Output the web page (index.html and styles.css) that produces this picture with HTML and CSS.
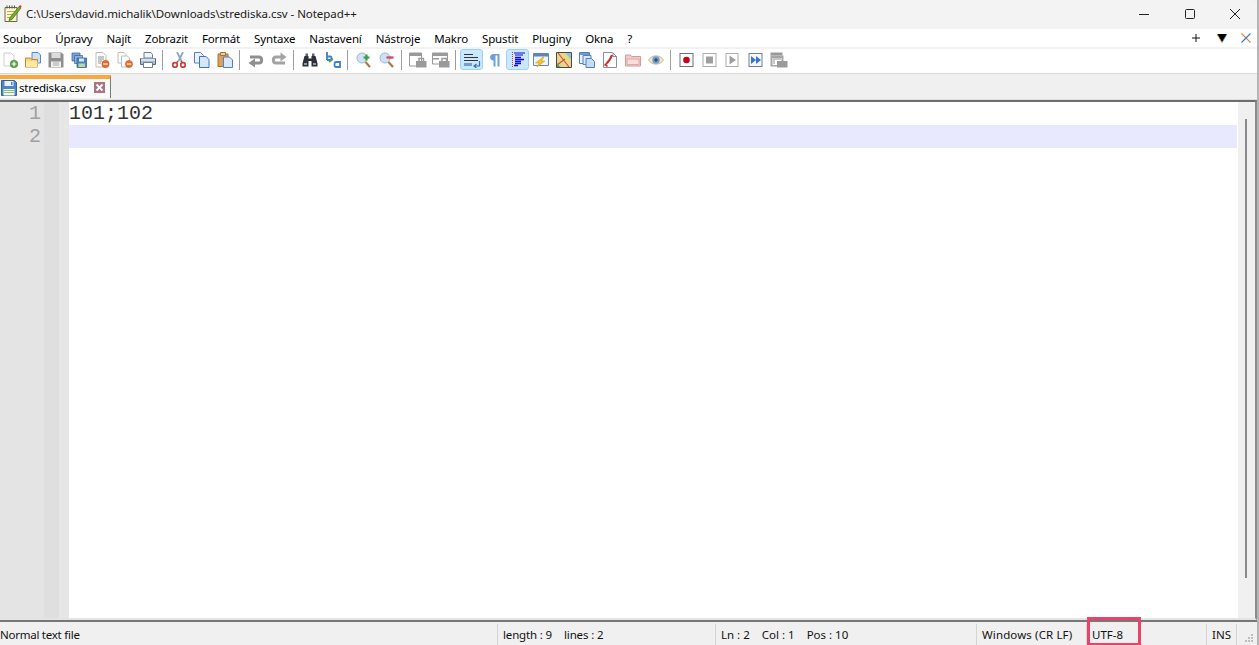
FILE: index.html
```html
<!DOCTYPE html>
<html lang="cs">
<head>
<meta charset="utf-8">
<title>strediska.csv - Notepad++</title>
<link rel="stylesheet" href="styles.css">
</head>
<body>
<div class="win">
  <header class="titlebar">
    <svg class="appicon" viewBox="0 0 18 18"><path d="M1 3h12v14H1z" fill="#fdf6c8" stroke="#6b6b5a"/><path d="M3 1v3M5.500 1v3M8 1v3M10.500 1v3" stroke="#555"/><path d="M3 7h8M3 10h6M3 13h5" stroke="#a9b06a"/><path d="M6 13L15 2l2 1.500L8 15l-3 1z" fill="#7bb026" stroke="#3f6a10" stroke-width=".7"/><path d="M15 2l1-1.500 1.500 1L17 3.500z" fill="#d33"/></svg>
    <span class="title">C:\Users\david.michalik\Downloads\strediska.csv - Notepad++</span>
    <div class="wincontrols">
      <svg class="wc" viewBox="0 0 10 10"><path d="M0 5.500h10" stroke="#222" stroke-width="1"/></svg>
      <svg class="wc" viewBox="0 0 10 10"><rect x=".5" y=".5" width="9" height="9" rx="1" fill="none" stroke="#222"/></svg>
      <svg class="wc" viewBox="0 0 10 10"><path d="M0 0l10 10M10 0L0 10" stroke="#222" stroke-width="1"/></svg>
    </div>
  </header>

  <nav class="menubar">
    <span>Soubor</span><span>Úpravy</span><span>Najít</span><span>Zobrazit</span><span>Formát</span><span>Syntaxe</span><span>Nastavení</span><span>Nástroje</span><span>Makro</span><span>Spustit</span><span>Pluginy</span><span>Okna</span><span>?</span>
    <div class="menuright">
      <svg class="mr plus" viewBox="0 0 8 8"><path d="M4 0v8M0 4h8" stroke="#111" stroke-width="1"/></svg>
      <svg class="mr" viewBox="0 0 10 10"><path d="M0 1h10L5 9.500z" fill="#000"/><path d="M0 1l5 8.500" stroke="#e98a1c" stroke-width=".8"/><path d="M10 1L5 9.500" stroke="#3a8fdc" stroke-width=".8"/></svg>
      <svg class="mr" viewBox="0 0 10 10"><path d="M.5.500l9 9" stroke="#e0853a" stroke-width="1.100"/><path d="M9.500.500l-9 9" stroke="#2f78c8" stroke-width="1.100"/></svg>
    </div>
  </nav>

  <div class="toolbar">
    <div class="btn"><svg viewBox="0 0 16 16"><path d="M2 1h7l3 3v10H2z" fill="#fff" stroke="#cfcfcf"/><circle cx="12" cy="12" r="3.800" fill="#5da84a" stroke="#3d7f30" stroke-width=".6"/><path d="M12 9.800v4.400M9.800 12h4.400" stroke="#fff" stroke-width="1.200"/></svg></div>
    <div class="btn"><svg viewBox="0 0 16 16"><path d="M7 .5h6l2.500 2.500v8H7z" fill="#cfe0f5" stroke="#5a86c0"/><path d="M.5 6h5l1 1.500h6V15H.5z" fill="#fbd77c" stroke="#c8862a"/><path d="M1 9.500h11.500V15H1z" fill="#fdeaa5"/></svg></div>
    <div class="btn"><svg viewBox="0 0 16 16"><path d="M.5.500h13l2 2v13H.5z" fill="#8f8f8f"/><path d="M3.500 1h9v5h-9z" fill="#dcdcdc"/><path d="M3 9.500h10V15H3z" fill="#efefef"/><path d="M5 11h6M5 13h6" stroke="#aaa"/></svg></div>
    <div class="btn"><svg viewBox="0 0 16 16"><path d="M1 1h8v8H1z" fill="#7ea6d8" stroke="#2f5f9e" stroke-width=".7"/><path d="M3.500 3.500h8v8h-8z" fill="#8db3e0" stroke="#2f5f9e" stroke-width=".7"/><path d="M6 6h9.500v9.500H6z" fill="#4f82c2" stroke="#2a5a98" stroke-width=".7"/><path d="M8 6.500h5v3H8z" fill="#dbe8f7"/><path d="M7.500 11.500h6.500V15H7.500z" fill="#b5dc98"/></svg></div>
    <div class="btn"><svg viewBox="0 0 16 16"><path d="M2 .5h7l3 3V15H2z" fill="#fff" stroke="#bdbdbd"/><path d="M4 5h6M4 7h6M4 9h4M4 11h3" stroke="#8d8d8d"/><circle cx="11.500" cy="12" r="3.700" fill="#ec6a2b" stroke="#c94f18" stroke-width=".5"/><path d="M9.300 12h4.400" stroke="#fff" stroke-width="1.300"/></svg></div>
    <div class="btn"><svg viewBox="0 0 16 16"><path d="M1 .5h6l2 2V11H1z" fill="#fff" stroke="#bdbdbd"/><path d="M4.500 4h6l2 2v9h-8z" fill="#fff" stroke="#bdbdbd"/><circle cx="12" cy="12" r="3.600" fill="#ec6a2b" stroke="#c94f18" stroke-width=".5"/><path d="M9.800 12h4.400" stroke="#fff" stroke-width="1.300"/></svg></div>
    <div class="btn"><svg viewBox="0 0 16 16"><path d="M4 .5h7l1.500 2V6h-8.500z" fill="#eef3f8" stroke="#6c7d90"/><path d="M.5 6.500h15v6h-15z" fill="#a9bdd2" stroke="#53667c"/><path d="M1 6.500h14v2.500H1z" fill="#d5e0ec"/><path d="M3.500 10.500h9v5h-9z" fill="#fff" stroke="#6c7d90"/></svg></div>
    <div class="sep"></div>
    <div class="btn"><svg viewBox="0 0 16 16"><path d="M12 0L7.500 9M6 0l4.500 9" stroke="#8fa4c0" stroke-width="1.800" fill="none"/><path d="M7 9L5.500 11M10 9l1.500 2" stroke="#c33" stroke-width="1.500"/><circle cx="4" cy="13" r="2.300" fill="none" stroke="#c73a3a" stroke-width="1.700"/><circle cx="12" cy="13" r="2.300" fill="none" stroke="#c73a3a" stroke-width="1.700"/></svg></div>
    <div class="btn"><svg viewBox="0 0 16 16"><path d="M.5.500h6l3 3v7.500h-9z" fill="#eaf2fb" stroke="#4f80c4"/><path d="M5.500 4.500h6.500l3 3v8h-9.500z" fill="#d6e5f7" stroke="#3f72bc"/></svg></div>
    <div class="btn"><svg viewBox="0 0 16 16"><path d="M1 2h10v12.500H1z" fill="#d9a35f" stroke="#a8702f"/><path d="M3.500 .5h5v3h-5z" fill="#e8d1ac" stroke="#a8702f"/><path d="M6.500 5h6l3 3v7.500h-9z" fill="#dbe8f8" stroke="#4f80c4"/></svg></div>
    <div class="sep"></div>
    <div class="btn"><svg viewBox="0 0 16 16"><path d="M2 5h9c3.500 0 3.500 6 0 6H6" fill="none" stroke="#8f8f8f" stroke-width="3"/><path d="M7 6.500v9L.5 11z" fill="#8f8f8f"/></svg></div>
    <div class="btn"><svg viewBox="0 0 16 16"><path d="M10 5H5c-3.500 0-3.500 6 0 6h9" fill="none" stroke="#a3a3a3" stroke-width="3"/><path d="M9.500.5v9L15.500 5z" fill="#a3a3a3"/></svg></div>
    <div class="sep"></div>
    <div class="btn"><svg viewBox="0 0 16 16"><path d="M2.500 4h4v2.500h3V4h4l2 7.500v3H9.500V9h-3v5.500H.5v-3z" fill="#2c3138"/><path d="M3.500 1.500h2.500v2.500H3.500zM10 1.500h2.500v2.500H10z" fill="#5a6472"/><path d="M2 11h3v2H2zM11 11h3v2h-3z" fill="#8b9ab0"/></svg></div>
    <div class="btn"><svg viewBox="0 0 16 16"><path d="M2 0v8M2 4.500h3.500c1.500 0 1.500 3.500 0 3.500H2" fill="none" stroke="#3d7fd0" stroke-width="1.800"/><path d="M4 10l4-3" stroke="#4fa34a" stroke-width="1.600"/><path d="M15 10h-4c-2 0-2 5 0 5h4M15 9v7" fill="none" stroke="#3d7fd0" stroke-width="1.800"/></svg></div>
    <div class="sep"></div>
    <div class="btn"><svg viewBox="0 0 16 16"><circle cx="6" cy="6" r="5" fill="#cfe2f5" stroke="#9ab8d8"/><path d="M9.500 10l4.500 5" stroke="#a87a4a" stroke-width="2.200"/><path d="M10.500 2.500v6M7.500 5.500h6" stroke="#3f9a3f" stroke-width="2.200"/></svg></div>
    <div class="btn"><svg viewBox="0 0 16 16"><circle cx="6" cy="6" r="5" fill="#cfe2f5" stroke="#9ab8d8"/><path d="M9.500 10l4.500 5" stroke="#a87a4a" stroke-width="2.200"/><path d="M7.500 5.500h7" stroke="#dc4a56" stroke-width="2.400"/></svg></div>
    <div class="sep"></div>
    <div class="btn"><svg class="wide" viewBox="0 0 18 16"><path d="M.5 1h12v13H.5z" fill="#fff" stroke="#9a9a9a"/><path d="M1 1h11v3H1z" fill="#9a9a9a"/><path d="M7 9h10.500v6.500H7z" fill="#9a9a9a"/><path d="M10 9V6.500h4.500V9" fill="none" stroke="#9a9a9a" stroke-width="1.500"/></svg></div>
    <div class="btn"><svg class="wide" viewBox="0 0 18 16"><path d="M.5 1h15v11H.5z" fill="#fff" stroke="#9a9a9a"/><path d="M1 1h14v3H1zM1 6h6v1.500H1z" fill="#9a9a9a"/><path d="M7 9h10.500v6.500H7z" fill="#9a9a9a"/><path d="M10 9V6.500h4.500V9" fill="none" stroke="#9a9a9a" stroke-width="1.500"/></svg></div>
    <div class="sep"></div>
    <div class="btn on"><svg class="wide" viewBox="0 0 18 16"><path d="M1 2.500h9M1 5.500h14M1 8.500h14" stroke="#333" stroke-width="1.200"/><path d="M1 12.500h8" stroke="#6f9fd8" stroke-width="3"/><path d="M16.500 9v5h-5M13.500 12l-2.500 2 2.500 2" fill="none" stroke="#3f6fb0" stroke-width="1.200"/></svg></div>
    <div class="btn"><svg viewBox="0 0 16 16"><path d="M6.500 14.500V8.500C2 8.500 2 2 6.500 2h6v12.500h-2V3.500h-2v11z" fill="#6f9fd8"/></svg></div>
    <div class="btn on"><svg viewBox="0 0 16 16"><path d="M2.500 0v16" stroke="#e03030" stroke-dasharray="1 1" stroke-width="1"/><path d="M4 1h11M5 3h8" stroke="#0a0ad8" stroke-width="1"/><path d="M5 5.500h6M5 7.500h9M5 9.500h6M5 11.500h6M4 13.500h4" stroke="#0a0ad8" stroke-width="1.300"/></svg></div>
    <div class="btn"><svg viewBox="0 0 16 16"><path d="M.5 1.500h15v12H.5z" fill="#f1f6fc" stroke="#5e86bd"/><path d="M1 2h14v2.500H1z" fill="#5e86bd"/><path d="M10 5L2.500 11H6l-2 4 8-6H8.500L11 5z" fill="#f2c230" stroke="#cf9a18" stroke-width=".5"/></svg></div>
    <div class="btn"><svg viewBox="0 0 16 16"><path d="M.5.500h15v15H.5z" fill="#c9d98a" stroke="#4a4a4a"/><path d="M1 9l6 6h8V9L9 1H1z" fill="#e9d78a"/><path d="M2 1l11 14M1 13l8-6" stroke="#cf4a3a" stroke-width="1.100"/><path d="M10 1h5v6z" fill="#8fc0df"/><path d="M1 11l3 4H1z" fill="#5fa04a"/></svg></div>
    <div class="btn"><svg viewBox="0 0 16 16"><path d="M.5.500h10v11H.5z" fill="#eef4fb" stroke="#4f80c4"/><path d="M1 1h9v2H1z" fill="#6f9ad0"/><path d="M4 3.500h8v9H4z" fill="#dce8f7" stroke="#4f80c4"/><path d="M7 6.500h5.500l3 3v6H7z" fill="#c8daf2" stroke="#4f80c4"/></svg></div>
    <div class="btn"><svg viewBox="0 0 16 16"><path d="M1.500.500h9l4 4v11h-13z" fill="#fff" stroke="#8f8f8f"/><path d="M11 .5v4h4" fill="none" stroke="#8f8f8f"/><path d="M10 3c-1 3-3 6-5 8" stroke="#cf2a2a" stroke-width="2.200" fill="none"/><path d="M2.500 13.500l3.500-3.500M4 13l1.500 1.500" stroke="#cf2a2a" stroke-width="1.600"/></svg></div>
    <div class="btn"><svg viewBox="0 0 16 16"><path d="M.5 3h5l1 1.500h9V14H.5z" fill="#f3c9c9" stroke="#d49a9a"/><path d="M2 7h12v5.500H2z" fill="#f8dddd" stroke="#dcaaaa"/></svg></div>
    <div class="btn"><svg viewBox="0 0 16 16"><path d="M.5 8C4 2.500 12 2.500 15.500 8 12 13.500 4 13.500.5 8z" fill="#f3ead8" stroke="#cfae82"/><circle cx="8" cy="8" r="3.800" fill="#6f9fd0"/><circle cx="8" cy="8" r="1.700" fill="#2f4c74"/></svg></div>
    <div class="sep"></div>
    <div class="btn"><svg viewBox="0 0 16 16"><rect x="1" y="1.500" width="13" height="13" fill="#fff" stroke="#707070"/><circle cx="7.500" cy="8" r="3.300" fill="#c80014"/></svg></div>
    <div class="btn"><svg viewBox="0 0 16 16"><rect x="1" y="1.500" width="13" height="13" fill="#fff" stroke="#ababab"/><rect x="4" y="4.500" width="7" height="7" fill="#9f9f9f"/></svg></div>
    <div class="btn"><svg viewBox="0 0 16 16"><rect x="1" y="1.500" width="12" height="13" fill="#fff" stroke="#ababab"/><path d="M4.500 3.500L11 8l-6.500 4.500z" fill="#9f9f9f"/></svg></div>
    <div class="btn"><svg viewBox="0 0 16 16"><rect x="1" y="1.500" width="13" height="13" fill="#f6f9fd" stroke="#6f7f96"/><path d="M3 4l5 4-5 4zM8 4l5 4-5 4z" fill="#3f72cf"/></svg></div>
    <div class="btn"><svg class="wide" viewBox="0 0 18 16"><path d="M.5.500h12v3H.5z" fill="#9a9a9a"/><path d="M.5 3.500h13v11H.5z" fill="#a6a6a6"/><path d="M2.500 6h9v7h-9z" fill="#fff"/><path d="M3 7h8M3 9h2M3 11h2" stroke="#8f8f8f"/><path d="M7 9h10.500v6.500H7z" fill="#9a9a9a"/></svg></div>
  </div>

  <div class="tabbar">
    <div class="tab">
      <svg class="tabicon" viewBox="0 0 16 16"><path d="M.5.500h13l2 2v13H.5z" fill="#4d86c8" stroke="#2f62a2"/><path d="M3.500 1h9v5h-9z" fill="#eaf1fa"/><path d="M10 2h1.500v3H10z" fill="#4d86c8"/><path d="M2.500 9h11v6.500h-11z" fill="#f4f7ee"/><path d="M2.500 10.500h11M2.500 12.500h11" stroke="#8cc06a"/></svg>
      <span class="tabname">strediska.csv</span>
      <svg class="tabclose" viewBox="0 0 11 11"><rect width="11" height="11" fill="#a67684"/><path d="M2.500 2.500l6 6M8.500 2.500l-6 6" stroke="#fff" stroke-width="1.800"/></svg>
    </div>
  </div>

  <main class="editor">
    <div class="gutter">
      <div class="nums"><div class="ln">1</div><div class="ln">2</div></div>
      <div class="fold"></div>
      <div class="gap"></div>
    </div>
    <div class="content">
      <div class="line">101;102</div>
      <div class="line current"></div>
    </div>
    <div class="scroll"><div class="thumb"></div></div>
  </main>

  <footer class="status">
    <div class="pane p1">Normal text file</div>
    <div class="pane p2"><span>length : 9</span><span>lines : 2</span></div>
    <div class="pane p3"><span>Ln : 2</span><span>Col : 1</span><span>Pos : 10</span></div>
    <div class="pane p4">Windows (CR LF)</div>
    <div class="pane p5">UTF-8</div>
    <div class="pane p6">INS</div>
    <svg class="grip" viewBox="0 0 10 10"><path d="M7 1h2v2H7zM4 4h2v2H4zM7 4h2v2H7zM1 7h2v2H1zM4 7h2v2H4zM7 7h2v2H7z" fill="#bdbdbd"/></svg>
  </footer>
  <div class="highlight"></div>
</div>
</body>
</html>
```
FILE: styles.css
```css
* { box-sizing: border-box; }
html, body { margin: 0; padding: 0; }
body { background: #fff; overflow: hidden; }
.win {
  position: relative;
  width: 1259px;
  height: 645px;
  display: flex;
  flex-direction: column;
  overflow: hidden;
  font-family: "Noto Sans", "Open Sans", sans-serif;
  font-size: 11.5px;
  color: #111;
  background: #f0f0f0;
  border-right: 2px solid #b5b5b5;
}
.titlebar {
  flex: 0 0 29px;
  display: flex;
  align-items: center;
  background: #f3f3f3;
  padding: 0 0 2px 4px;
  border-top-right-radius: 6px;
}
.appicon { width: 18px; height: 19px; }
.title { margin-left: 4px; color: #1a1a1a; letter-spacing: -0.06px; }
.wincontrols { margin-left: auto; display: flex; gap: 35.5px; padding-right: 17px; }
.wc { width: 10px; height: 10px; display: block; }
.menubar {
  flex: 0 0 18px;
  display: flex;
  align-items: center;
  gap: 14px;
  padding-left: 3px;
  background: #fff;
  letter-spacing: -0.15px;
  color: #000;
}
.menuright { margin-left: auto; display: flex; gap: 14px; padding-right: 6px; align-items: center; }
.mr { width: 10px; height: 10px; display: block; }
.mr.plus { width: 8px; height: 8px; margin-right: 3px; }
.toolbar {
  flex: 0 0 27px;
  display: flex;
  align-items: flex-start;
  margin-left: -2px;
  padding-bottom: 3px;
  background: #fff;
  border-top: 2px solid #f2f2f2;
  border-bottom: 1px solid #d9d9d9;
}
.btn {
  flex: 0 0 23px;
  height: 21px;
  display: flex;
  align-items: center;
  justify-content: center;
  border: 1px solid transparent;
  border-radius: 3px;
}
.btn svg { width: 16px; height: 16px; display: block; }
.btn svg.wide { width: 18px; }
.btn.on { background: #cce8ff; border-color: #99d1ff; }
.sep { flex: 0 0 8px; height: 21px; }
.sep::before { content: ""; display: block; width: 1px; height: 20px; margin: 1px 0 0 3px; background: #9d9d9d; }
.tabbar {
  flex: 0 0 26px;
  display: flex;
  align-items: flex-start;
  padding-top: 1px;
  background: #f0f0f0;
  border-bottom: 1px solid #dedede;
}
.tab {
  width: 111px;
  height: 23px;
  display: flex;
  align-items: center;
  background: #fafafa;
  border-top: 4px solid #faa73e;
  border-right: 1px solid #7a7a7a;
  padding: 0 0 2px 1px;
}
.tabicon { width: 16px; height: 16px; display: block; }
.tabname { margin-left: 2px; color: #000; letter-spacing: -0.18px; }
.tabclose { width: 11px; height: 11px; margin-left: auto; margin-right: 5px; display: block; }
.editor {
  flex: 1 1 auto;
  min-height: 0;
  display: flex;
  background: #fff;
  border-top: 2px solid #6e6e6e;
  border-right: 2px solid #8a8a8a;
  border-bottom: 2px solid #e4e4e4;
}
.gutter { flex: 0 0 69px; display: flex; background: #e4e4e4; }
.nums { flex: 0 0 44px; }
.ln {
  height: 23px;
  line-height: 23px;
  text-align: right;
  padding-right: 3px;
  font-family: "Liberation Mono", monospace;
  font-size: 20px;
  color: #a0a0a0;
}
.fold { flex: 0 0 15px; background: #dfdfdf; }
.gap { flex: 1; background: #e6e6e6; }
.content { flex: 1 1 auto; min-width: 0; }
.line {
  height: 23px;
  line-height: 23px;
  font-family: "Liberation Mono", monospace;
  font-size: 20px;
  color: #333;
}
.line.current { background: #e8e8ff; }
.scroll { flex: 0 0 18px; background: #f0f0f0; border-left: 1px solid #fff; }
.thumb { width: 2px; height: 459px; margin: 17px 0 0 7px; background: #8a8a8a; }
.status {
  flex: 0 0 25px;
  display: flex;
  align-items: center;
  background: #f0f0f0;
  border-top: 2px solid #777;
  position: relative;
  padding-top: 2px;
}
.pane { height: 100%; display: flex; align-items: center; gap: 12px; padding: 0 0 1px 5px; border-right: 1px solid #d4d4d4; color: #111; white-space: nowrap; }
.p1 { flex: 0 0 498px; padding-left: 0; letter-spacing: -0.25px; }
.p2 { flex: 0 0 218px; letter-spacing: -0.15px; }
.p3 { flex: 0 0 261px; }
.p4 { flex: 0 0 110px; letter-spacing: .12px; }
.p5 { flex: 0 0 120px; }
.p6 { flex: 0 0 30px; }
.grip { width: 10px; height: 10px; position: absolute; right: 3px; bottom: 2px; }
.highlight {
  position: absolute;
  left: 1087px;
  top: 617px;
  width: 54px;
  height: 28px;
  border: 3px solid #ec4169;
  border-bottom-width: 2px;
}
```
